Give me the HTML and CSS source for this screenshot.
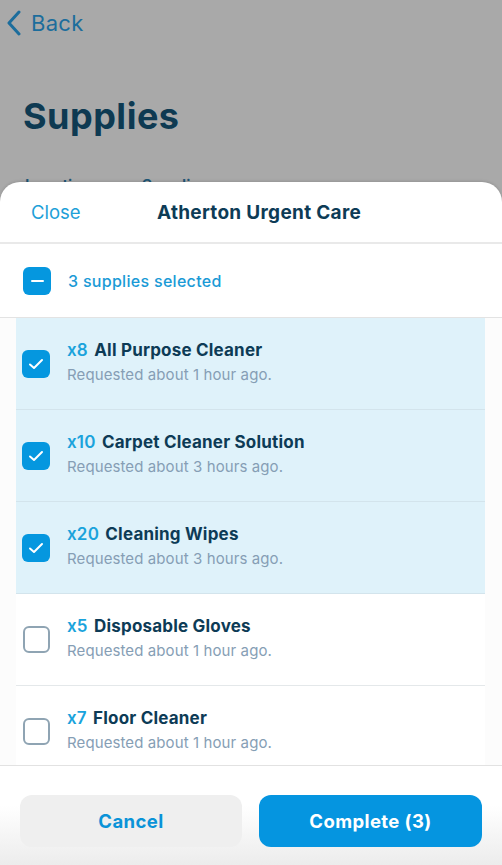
FILE: index.html
```html
<!DOCTYPE html>
<html lang="en">
<head>
<meta charset="utf-8">
<title>Supplies</title>
<link rel="stylesheet" href="styles.css">
</head>
<body>
<div class="page">
  <div class="nav">
    <svg class="chev" width="14" height="26" viewBox="0 0 14 26"><path d="M12 2 L2 13 L12 24" fill="none" stroke="currentColor" stroke-width="3" stroke-linecap="round" stroke-linejoin="round"/></svg>
    <span class="back">Back</span>
  </div>
  <h1 class="title">Supplies</h1>
  <div class="tabs"><span>Location</span><span>Supplies</span></div>
</div>

<div class="sheet">
  <header class="sheet-head">
    <span class="close">Close</span>
    <span class="sheet-title">Atherton Urgent Care</span>
    <span></span>
  </header>

  <div class="select-all">
    <span class="box box-on"><span class="minus"></span></span>
    <span class="sel-text">3 supplies selected</span>
  </div>

  <div class="list">
    <div class="row on">
      <span class="box box-on"><svg width="16" height="12" viewBox="0 0 16 12"><path d="M2 6.5 L6 10 L14 2" fill="none" stroke="#fff" stroke-width="2" stroke-linecap="round" stroke-linejoin="round"/></svg></span>
      <div class="info"><div class="name"><span class="qty">x8</span> All Purpose Cleaner</div><div class="meta">Requested about 1 hour ago.</div></div>
    </div>
    <div class="row on">
      <span class="box box-on"><svg width="16" height="12" viewBox="0 0 16 12"><path d="M2 6.5 L6 10 L14 2" fill="none" stroke="#fff" stroke-width="2" stroke-linecap="round" stroke-linejoin="round"/></svg></span>
      <div class="info"><div class="name"><span class="qty">x10</span> Carpet Cleaner Solution</div><div class="meta">Requested about 3 hours ago.</div></div>
    </div>
    <div class="row on">
      <span class="box box-on"><svg width="16" height="12" viewBox="0 0 16 12"><path d="M2 6.5 L6 10 L14 2" fill="none" stroke="#fff" stroke-width="2" stroke-linecap="round" stroke-linejoin="round"/></svg></span>
      <div class="info"><div class="name"><span class="qty">x20</span> Cleaning Wipes</div><div class="meta">Requested about 3 hours ago.</div></div>
    </div>
    <div class="row">
      <span class="box box-off"></span>
      <div class="info"><div class="name"><span class="qty">x5</span> Disposable Gloves</div><div class="meta">Requested about 1 hour ago.</div></div>
    </div>
    <div class="row">
      <span class="box box-off"></span>
      <div class="info"><div class="name"><span class="qty">x7</span> Floor Cleaner</div><div class="meta">Requested about 1 hour ago.</div></div>
    </div>
  </div>

  <footer class="foot">
    <button class="btn btn-cancel">Cancel</button>
    <button class="btn btn-complete">Complete (3)</button>
  </footer>
</div>
</body>
</html>
```

FILE: styles.css
```css
* { box-sizing: border-box; }
html, body { margin: 0; padding: 0; }
body {
  width: 502px;
  height: 865px;
  overflow: hidden;
  background: #a9a9a9;
  font-family: Inter, "Noto Sans", "Liberation Sans", sans-serif;
  position: relative;
}
.page { padding: 10px 0 0 0; }
.nav {
  display: flex;
  align-items: center;
  gap: 10px;
  padding-left: 7px;
  height: 26px;
  color: #1c6d9c;
}
.chev { display: block; }
.back { font-size: 22px; line-height: 26px; letter-spacing: 0.3px; }
.title {
  margin: 58px 0 0 23px;
  font-size: 36px;
  line-height: 44px;
  font-weight: 700;
  color: #0e3a52;
  letter-spacing: 0.5px;
}
.tabs {
  display: flex;
  gap: 50px;
  margin: 37px 0 0 25px;
  font-size: 16px;
  font-weight: 600;
  color: #1e5676;
}
.sheet {
  position: absolute;
  left: 0; right: 0; top: 182px; bottom: 0;
  background: #fff;
  border-radius: 20px 20px 0 0;
  display: flex;
  flex-direction: column;
  box-shadow: 0 -1px 3px rgba(0,0,0,0.12);
}
.sheet-head {
  display: grid;
  grid-template-columns: 1fr auto 1fr;
  align-items: center;
  height: 62px;
  padding: 0 15px 0 31px;
  border-bottom: 2px solid #e9e9e9;
}
.close { font-size: 18.5px; color: #1da0d8; }
.sheet-title { font-size: 19px; font-weight: 700; color: #0d3b56; letter-spacing: 0.3px; }
.select-all {
  display: flex;
  align-items: center;
  gap: 17px;
  height: 74px;
  padding-left: 23px;
  border-bottom: 1.5px solid #e3e3e3;
}
.sel-text { font-size: 16px; color: #1a9ad6; font-weight: 500; letter-spacing: 0.3px; }
.box {
  width: 28px; height: 28px;
  border-radius: 6px;
  flex: none;
  display: flex;
  align-items: center;
  justify-content: center;
}
.box-on { background: #0597df; }
.box-off { width: 27px; height: 27px; border: 2.5px solid #8fa4b3; border-radius: 6px; margin-left: 1px; }
.minus { width: 13px; height: 2px; background: #fff; border-radius: 1px; }
.list {
  flex: 1;
  min-height: 0;
  overflow: hidden;
  background: #fcfcfc;
  padding: 0 17px 0 16px;
  display: flex;
  flex-direction: column;
}
.row {
  display: flex;
  flex: none;
  align-items: center;
  gap: 17px;
  height: 92px;
  padding-left: 6px;
  border-bottom: 1px solid #e4e8ea;
  background: #fff;
}
.row.on { background: #dff2fa; border-bottom-color: #d3e4ec; }
.info { display: flex; flex-direction: column; gap: 5px; margin-top: -3px; }
.name { font-size: 17px; font-weight: 700; color: #0d3b56; letter-spacing: 0.2px; }
.qty { color: #1aa3dc; font-weight: 600; margin-right: 2px; }
.meta { font-size: 15px; color: #869eb5; letter-spacing: 0.1px; }
.foot {
  height: 100px;
  flex: none;
  border-top: 1.5px solid #e2e2e2;
  display: flex;
  gap: 17px;
  padding: 29px 20px 0 20px;
  background: linear-gradient(#ffffff 40%, #ececec);
}
.btn {
  font-family: inherit;
  width: 222px;
  height: 52px;
  border: none;
  border-radius: 12px;
  font-size: 18.5px;
  font-weight: 700;
  letter-spacing: 0.4px;
}
.btn-cancel { background: #efefef; color: #0a93d8; }
.btn-complete { background: #0595e0; color: #fff; width: 223px; }
```
